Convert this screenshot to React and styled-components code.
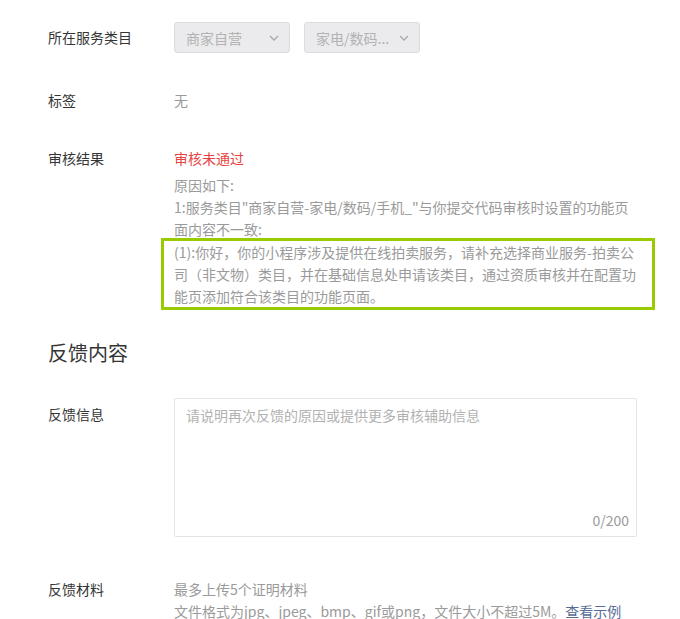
import styled, { createGlobalStyle } from "styled-components";

const GlobalStyle = createGlobalStyle`
  body {
    margin: 0;
    background: #fff;
    font-family: "Noto Sans CJK SC", "Liberation Sans", sans-serif;
    font-size: 14px;
    color: #353535;
  }
`;

const Page = styled.div`
  padding: 22px 0 0 48px;
  width: 640px;
  box-sizing: border-box;
`;

const Row = styled.div`
  display: flex;
  align-items: flex-start;
  margin-top: ${(p) => p.gap || 0}px;
`;

const Label = styled.div`
  width: 126px;
  flex-shrink: 0;
  line-height: ${(p) => p.lh || 22}px;
  padding-top: ${(p) => p.pt || 0}px;
  color: #353535;
`;

const Field = styled.div`
  flex: 1;
  min-width: 0;
`;

const Selects = styled.div`
  display: flex;
  gap: 14px;
`;

const SelectBox = styled.div`
  width: 116px;
  height: 31px;
  box-sizing: border-box;
  border: 1px solid #dcdcde;
  border-radius: 3px;
  background: #ebebed;
  display: flex;
  align-items: center;
  justify-content: space-between;
  padding: 0 10px 0 11px;
  color: #b2b2b2;
  font-size: 14px;

  span {
    white-space: nowrap;
    overflow: hidden;
  }
`;

const Text = styled.div`
  line-height: 22px;
  color: ${(p) => p.color || "#9a9a9a"};
  margin-bottom: ${(p) => p.mb || 0}px;
`;

const Reason = styled.div`
  width: 458px;
  line-height: 22px;
  color: #9a9a9a;
`;

const Highlight = styled.div`
  border: 3px solid #99cc00;
  margin: -2px -23px 0 -13px;
  padding: 0 16px 0 10px;
`;

const Heading = styled.h2`
  margin: 29px 0 0;
  font-size: 20px;
  font-weight: normal;
  line-height: 28px;
  color: #353535;
`;

const TextAreaWrap = styled.div`
  position: relative;
  width: 463px;
  height: 139px;
  box-sizing: border-box;
  border: 1px solid #e4e4e4;
  border-radius: 2px;
`;

const TextArea = styled.textarea`
  display: block;
  width: 100%;
  height: 100%;
  box-sizing: border-box;
  border: none;
  outline: none;
  resize: none;
  padding: 5px 11px;
  font: inherit;
  line-height: 22px;
  color: #353535;
  background: transparent;

  &::placeholder {
    color: #b2b2b2;
  }
`;

const Counter = styled.span`
  position: absolute;
  right: 7px;
  bottom: 5px;
  line-height: 22px;
  color: #9a9a9a;
`;

const Link = styled.a`
  color: #576b95;
  text-decoration: none;
`;

function Chevron() {
  return (
    <svg width="10" height="6" viewBox="0 0 10 6" fill="none">
      <polyline points="1,1 5,5 9,1" stroke="#a8a8a8" strokeWidth="1.3" />
    </svg>
  );
}

export default function App() {
  return (
    <>
      <GlobalStyle />
      <Page>
        <Row>
          <Label lh={31}>所在服务类目</Label>
          <Field>
            <Selects>
              <SelectBox>
                <span>商家自营</span>
                <Chevron />
              </SelectBox>
              <SelectBox>
                <span>家电/数码...</span>
                <Chevron />
              </SelectBox>
            </Selects>
          </Field>
        </Row>

        <Row gap={36}>
          <Label>标签</Label>
          <Field>
            <Text>无</Text>
          </Field>
        </Row>

        <Row gap={36}>
          <Label>审核结果</Label>
          <Field>
            <Text color="#e64340" mb={5}>审核未通过</Text>
            <Reason>
              原因如下:
              <br />
              1:服务类目"商家自营-家电/数码/手机_"与你提交代码审核时设置的功能页面内容不一致:
              <Highlight>
                (1):你好，你的小程序涉及提供在线拍卖服务，请补充选择商业服务-拍卖公司（非文物）类目，并在基础信息处申请该类目，通过资质审核并在配置功能页添加符合该类目的功能页面。
              </Highlight>
            </Reason>
          </Field>
        </Row>

        <Heading>反馈内容</Heading>

        <Row gap={31}>
          <Label pt={5}>反馈信息</Label>
          <Field>
            <TextAreaWrap>
              <TextArea placeholder="请说明再次反馈的原因或提供更多审核辅助信息" />
              <Counter>0/200</Counter>
            </TextAreaWrap>
          </Field>
        </Row>

        <Row gap={41}>
          <Label>反馈材料</Label>
          <Field>
            <Text>最多上传5个证明材料</Text>
            <Text>
              文件格式为jpg、jpeg、bmp、gif或png，文件大小不超过5M。
              <Link href="#">查看示例</Link>
            </Text>
          </Field>
        </Row>
      </Page>
    </>
  );
}
